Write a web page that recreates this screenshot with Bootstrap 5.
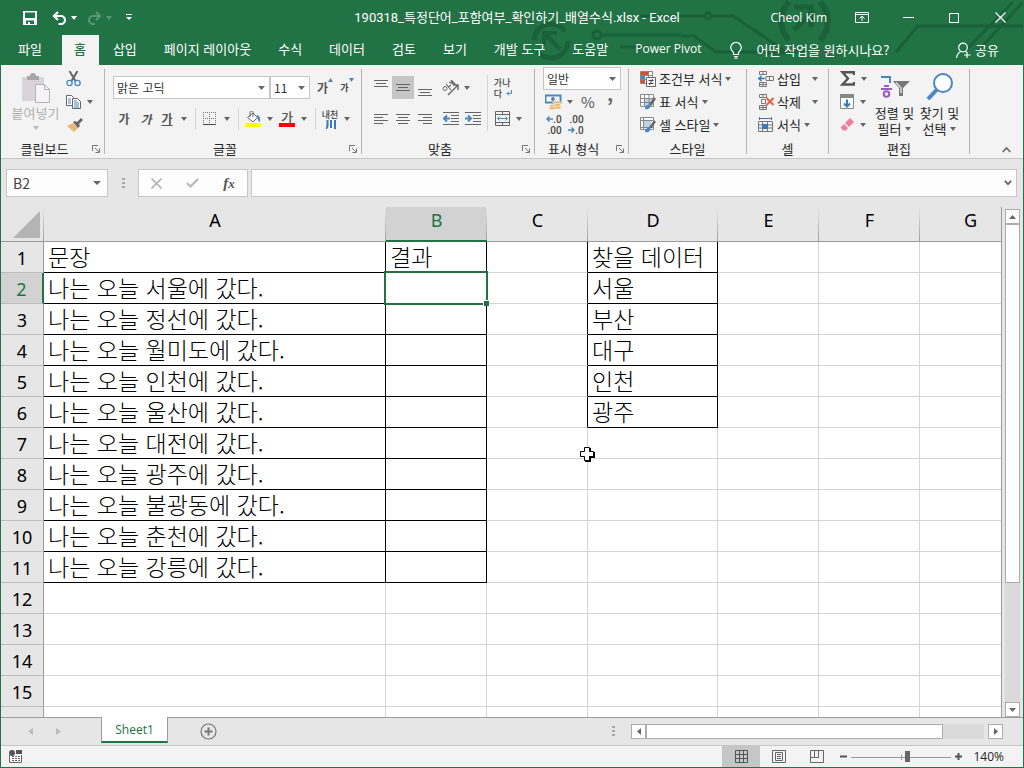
<!DOCTYPE html>
<html lang="ko">
<head>
<meta charset="utf-8">
<meta name="viewport" content="width=device-width, initial-scale=1">
<title>190318_특정단어_포함여부_확인하기_배열수식.xlsx - Excel</title>
<link href="https://cdn.jsdelivr.net/npm/bootstrap@5.3.0/dist/css/bootstrap.min.css" rel="stylesheet">
<style>
:root{--xl:#217346;--line:#d4d4d4;--edge:#9b9b9b;--ink:#262626}
body{font-family:"Noto Sans CJK KR","Noto Sans",sans-serif;font-size:13px;line-height:16px;color:var(--ink);background:#e6e6e6;border:solid var(--xl);border-width:0 1px 1px}
button,.flat{border:0;background:none;padding:0;color:inherit;border-radius:0}
svg{display:block;flex:none}
.top-area{background:var(--xl);color:#fff}
.top-art{right:0;top:0;z-index:0}
.title-row{height:35px}
.side{flex:1 0 0}
.doc-title{font-family:Roboto,"Noto Sans CJK KR",sans-serif}
.latin{font-family:"Open Sans","Noto Sans",sans-serif;font-size:12px}
.quick{padding-left:22px}
.q-undo{margin-left:15px}.q-redo{margin-left:10px}.q-more{margin-left:14px}
.win{gap:24px;padding-right:12px}
.tab-row{height:30px}
.tab-row .nav-link{color:#fff;padding:0 13px 0 14px;height:30px;line-height:28px;border-radius:0}
.tab-row .nav-link.active{background:#f3f3f3;color:var(--xl);padding:0 13px 0 12px;font-weight:500}
.tab-row .file-tab{padding:0 20px 0 17px}
.tab-row .tell{gap:14px;padding-left:16px}
.caret{width:0;height:0;border:3px solid transparent;border-top:4px solid #666;border-bottom:0;flex:none}
.ribbon{background:#f3f3f3;border-bottom:1px solid #c6c6c6;height:94px}
.grp{position:relative;display:flex;flex-direction:column;border-right:1px solid transparent;flex:none}
.grp::after{content:"";position:absolute;right:-1px;top:4px;bottom:4px;width:1px;background:#b5b5b5}
.grp-body{height:74px;display:flex}
.grp-label{height:19px;display:flex;align-items:center}
.grp-label span{flex:1;text-align:center}
.launch{width:16px;height:16px}
.g-clip{width:104px}.g-font{width:257px}.g-align{width:173px}.g-num{width:94px}.g-style{width:118px}.g-cell{width:82px}.g-edit{width:141px}
.two{display:flex;flex-direction:column;gap:8px;padding-top:11px}
.three{display:flex;flex-direction:column;padding-top:2px}
.three>*{height:23px}
.r{display:flex;align-items:center;height:23px}
.tb{width:22px;height:23px;display:flex;align-items:center;justify-content:center}
.tb.on{background:#c6c6c6}
.split{width:34px;height:23px;display:grid;grid-template-columns:20px 14px;place-items:center}
.vsep{width:1px;height:22px;background:#d5d5d5;margin:0 4px}
.box-select{appearance:none;border:1px solid #c6c6c6;border-radius:0;height:23px;padding:0 0 0 3px;font-size:12px;color:#333;background:#fff url("data:image/svg+xml,%3Csvg xmlns='http://www.w3.org/2000/svg' width='7' height='4'%3E%3Cpath d='M0 0h7L3.500 4z' fill='%23666'/%3E%3C/svg%3E") no-repeat right 4px center}
.cmd{display:flex;align-items:center;gap:3px;white-space:nowrap}
.big{width:45px;display:flex;flex-direction:column;align-items:center}
.paste{margin-left:12px;color:#b0b0b0}
.ga{font-size:12px;font-weight:700;color:#555;line-height:16px}
.tiny{font-size:9px;line-height:11px;color:#444;font-weight:500;display:flex;flex-direction:column}
.tiny>span{display:flex;align-items:center;height:11px}
.num{font-family:Roboto,sans-serif;font-size:10px;align-items:flex-end}
.fbar{height:48px;padding:10px 6px 10px 5px;gap:3px}
.fbox{background:#fdfdfd;border:1px solid #c6c6c6;height:28px;border-radius:0}
.name-box{width:102px;padding-right:6px}
.name-box input{width:70px;font-size:14px;color:#444;padding:0 0 0 6px}
.fx-box{width:110px}
.grip{width:3px;height:11px;background:repeating-linear-gradient(#a6a6a6 0 2px,transparent 2px 4px)}
.fbar .grip{margin:0 10px 0 11px}
.sheet-wrap{min-height:0}
.sheet{border-right:1px solid var(--edge);min-width:0;background:#fff}
.cells{table-layout:fixed;border-collapse:separate;border-spacing:0;width:1020px}
.cells td{height:31px;padding:0 0 2px 4px;border:solid var(--line);border-width:0 1px 1px 0;font-size:23px;line-height:28px;font-weight:300;color:#000;white-space:nowrap}
.cells thead th{height:35px;padding:0 0 8px;border-bottom:1px solid var(--edge);background:linear-gradient(to bottom,#e6e6e6,#9f9f9f) right/1px 100% no-repeat #e6e6e6}
.cells th{font:400 18px/26px "Noto Sans","Noto Sans CJK KR",sans-serif;color:#000;text-align:center;background:#e6e6e6}
.cells thead th.corner{padding:4px 4px 3px 0}
.cells tbody th{height:31px;padding:2px 0 0;border:solid #bdbdbd;border-width:0 1px 1px 0;border-right-color:var(--edge)}
.cells thead th.sel{background-color:#d2d2d2;color:var(--xl);border-bottom:2px solid var(--xl);padding-bottom:7px}
.cells tbody th.sel{background:#d2d2d2;color:var(--xl);border-right:2px solid var(--xl)}
.cells td.bk{border-color:#000}
.cells td.br{border-right-color:#000}
.cells td.cur{position:relative}
.pick{position:absolute;inset:-2px;border:2px solid var(--xl)}
.pick::after{content:"";position:absolute;right:-3px;bottom:-3px;width:6px;height:6px;background:var(--xl);border:solid #fff;border-width:1px 0 0 1px}
.pointer{left:578px;top:239px}
.vbar{width:21px;padding:2px 3px 0}
.sbtn{width:15px;height:15px;background:#fff;border:1px solid #ababab;display:flex;align-items:center;justify-content:center;flex:none}
.vtrack,.htrack{background:#dadada;flex:1}
.vthumb{height:75%;background:#fff;border:1px solid #ababab}
.hthumb{width:88%;height:15px;background:#fff;border:1px solid #ababab}
.tabs-row{height:28px;border-top:1px solid var(--edge)}
.sheet-nav{width:100px;padding-left:27px;gap:23px}
.sheet-tab{width:67px;height:26px;margin-top:-1px;background:#fff;color:var(--xl);border:solid var(--edge);border-width:0 1px;border-bottom:2px solid var(--xl);font:400 12px/26px "Open Sans","Noto Sans",sans-serif;text-align:center;text-decoration:none}
.hbar{width:376px}
.status{height:22px;background:#f3f3f3;border-top:1px solid #c6c6c6}
.view{width:38px;height:21px;display:flex;align-items:center;justify-content:center}
.view.on{background:#c6c6c6}
.zoomer{appearance:none;width:100px;height:16px;margin:0;background:linear-gradient(#999,#999) 0 8px/100% 1px no-repeat,linear-gradient(#999,#999) 50px 6px/1px 5px no-repeat}
.zoomer::-webkit-slider-thumb{appearance:none;width:5px;height:11px;background:#666;border:0}
.zoomer::-moz-range-thumb{width:5px;height:11px;background:#666;border:0;border-radius:0}
.pct{font:400 12px/16px "Open Sans","Noto Sans",sans-serif;margin:0 19px 0 11px}
</style>
</head>
<body class="vh-100 d-flex flex-column overflow-hidden">

<header class="top-area position-relative flex-shrink-0">
  <svg class="top-art position-absolute" width="500" height="65" viewBox="523 0 500 65" fill="none" stroke="#1b6039" stroke-width="3" aria-hidden="true">
    <circle cx="551" cy="41" r="17" stroke-width="5" stroke-dasharray="42 12"/><path d="M560 49L545 34M544 46V33h13" stroke-width="4"/>
    <path d="M640 16h65M711 16h22l30 20 24 17h-20M600 35h82M620 47h30M682 36h12l22 16h90"/><circle cx="708" cy="16" r="3"/><circle cx="597" cy="35" r="4"/>
    <path d="M789 2a27 27 0 0 0 0 38M820 2a27 27 0 0 1 0 38" stroke-width="6"/><path d="M794 30l20-20M794 7h17v20" stroke-width="5"/>
    <path d="M896 52l22-26h105M964 52l49-50M977 52l46-50"/>
  </svg>
  <div class="title-row d-flex align-items-center position-relative">
    <div class="side quick d-flex align-items-center">
      <button aria-label="저장"><svg width="14" height="14" viewBox="0 0 14 14"><path d="M0 0h14v14H0z" fill="#fff"/><path d="M2 1.500h10V7H2zM3 9.500h8V13H7v-2H5v2H3z" fill="#217346"/></svg></button>
      <button class="q-undo d-flex align-items-center gap-1" aria-label="실행 취소"><svg width="15" height="14" viewBox="0 0 15 14" fill="none" stroke="#fff" stroke-width="2.200"><path d="M6 1L2 5l4 4M2 5h7a4 4 0 0 1 0 8H6.500"/></svg><i class="caret" style="border-top-color:#fff"></i></button>
      <button class="q-redo d-flex align-items-center gap-1 opacity-25" aria-label="다시 실행"><svg width="15" height="14" viewBox="0 0 15 14" fill="none" stroke="#fff" stroke-width="2.200"><path d="M9 1l4 4-4 4M13 5H6a4 4 0 0 0 0 8h2"/></svg><i class="caret" style="border-top-color:#fff"></i></button>
      <button class="q-more" aria-label="빠른 실행 도구 모음 사용자 지정"><svg width="6" height="7"><path d="M0 0h6v1H0zM0 3h6L3 6z" fill="#fff"/></svg></button>
    </div>
    <div class="doc-title text-nowrap">190318_특정단어_포함여부_확인하기_배열수식.xlsx - Excel</div>
    <div class="side win d-flex align-items-center justify-content-end">
      <span class="latin text-nowrap">Cheol Kim</span>
      <button class="tb" aria-label="리본 메뉴 표시 옵션"><svg width="14" height="11" fill="none" stroke="#fff"><path d="M.5.5h13v10H.5zM.5 2.500h13M7 9V4M4.500 6.500L7 4l2.500 2.500"/></svg></button>
      <button class="tb" aria-label="최소화"><svg width="11" height="2"><path d="M0 .5h11" stroke="#fff"/></svg></button>
      <button class="tb" aria-label="최대화"><svg width="10" height="10" fill="none" stroke="#fff"><path d="M.5.5h9v9h-9z"/></svg></button>
      <button class="tb" aria-label="닫기"><svg width="11" height="11" stroke="#fff" stroke-width="1.200"><path d="M.5.5l10 10M10.500.5l-10 10"/></svg></button>
    </div>
  </div>
  <nav class="tab-row d-flex position-relative text-nowrap">
    <a class="nav-link file-tab" href="#">파일</a><a class="nav-link active" href="#">홈</a><a class="nav-link" href="#">삽입</a><a class="nav-link" href="#">페이지 레이아웃</a><a class="nav-link" href="#">수식</a><a class="nav-link" href="#">데이터</a><a class="nav-link" href="#">검토</a><a class="nav-link" href="#">보기</a><a class="nav-link" href="#">개발 도구</a><a class="nav-link" href="#">도움말</a><a class="nav-link latin" href="#">Power Pivot</a>
    <a class="nav-link tell d-flex align-items-center" href="#"><svg width="12" height="17" viewBox="0 0 12 17" fill="none" stroke="#fff" stroke-width="1.200"><path d="M3.500 12.500v-2C2 9 .7 7.700.7 5.700a5.300 5.300 0 0 1 10.600 0c0 2-1.300 3.300-2.800 4.800v2zM4 14.500h4M4.500 16.200h3"/></svg>어떤 작업을 원하시나요?</a>
    <a class="nav-link ms-auto me-2 pe-3 d-flex align-items-center gap-1" href="#"><svg width="15" height="17" viewBox="0 0 15 17" fill="none" stroke="#fff" stroke-width="1.200"><circle cx="7" cy="5.500" r="4.300"/><path d="M.6 16c0-3 1.800-5 4-6.500M9.500 9.500l1.500 1M11 10v6M8 13h6.500"/></svg>공유</a>
  </nav>
</header>

<section class="ribbon d-flex flex-shrink-0">
  <div class="grp g-clip">
    <div class="grp-body">
      <button class="big paste pt-1 mt-1 text-nowrap"><svg width="30" height="31" viewBox="0 0 30 31"><path d="M1 4h22v24H1z" fill="#d8d4d8"/><path d="M6 7V3h3a3 3 0 0 1 6 0h3v4z" fill="#a9a5a9"/><path d="M14.500 11.500h9l5 5v13h-14z" fill="#f6f4f8" stroke="#b4b0b6"/><path d="M23.500 11.500v5h5" fill="none" stroke="#b4b0b6"/></svg><span style="line-height:18px">붙여넣기</span><i class="caret mt-1" style="border-top-color:#bbb"></i></button>
      <div class="three ps-2">
        <button class="tb" style="width:14px" aria-label="잘라내기"><svg width="15" height="16" viewBox="0 0 15 16" fill="none"><path d="M3.500 0l6 10M11.500 0l-6 10" stroke="#666" stroke-width="2"/><circle cx="3.500" cy="12" r="2.600" stroke="#4a86c0" stroke-width="1.300"/><circle cx="11.500" cy="12" r="2.600" stroke="#4a86c0" stroke-width="1.300"/></svg></button>
        <button class="cmd" style="gap:6px" aria-label="복사"><svg width="15" height="14" viewBox="0 0 15 14"><g fill="#fff" stroke="#666"><path d="M.5.5h5l2 2v8h-7z"/><path d="M6.500 3.500h5l3 3v7h-8z"/></g><path d="M2 4h3M2 6h3M2 8h3M8 8h5M8 10h5M8 6h3M8 12h5" stroke="#4a86c0"/></svg><i class="caret"></i></button>
        <button class="tb" style="width:18px" aria-label="서식 복사"><svg width="16" height="14" viewBox="0 0 16 14"><path d="M0 8l6-3 5 5-4 4z" fill="#e9b872"/><path d="M6 4l2-1 2 1 4-4 2 2-4 4 1 2-2 2z" fill="#666"/></svg></button>
      </div>
    </div>
    <div class="grp-label"><span>클립보드</span><button class="launch" aria-label="클립보드 옵션"><svg width="8" height="8" class="m-1" fill="none" stroke="#777"><path d="M.5 6V.5H6M3 3l4 4M7.500 3.500v4h-4"/></svg></button></div>
  </div>

  <div class="grp g-font">
    <div class="grp-body ps-2"><div class="two">
      <div class="r"><select class="box-select" style="width:157px" aria-label="글꼴"><option>맑은 고딕</option></select><select class="box-select" style="width:40px" aria-label="글꼴 크기"><option>11</option></select>
        <button class="tb ms-1" aria-label="글꼴 크기 크게"><span class="ga fw-semibold">가</span><svg width="5" height="4" class="mb-3"><path d="M0 4h5L2.500 0z" fill="#4a86c0"/></svg></button>
        <button class="tb" aria-label="글꼴 크기 작게"><span class="ga tiny fw-semibold">가</span><svg width="5" height="4" class="mb-3"><path d="M0 0h5L2.500 4z" fill="#4a86c0"/></svg></button></div>
      <div class="r">
        <button class="tb ga">가</button><button class="tb ga fst-italic">가</button><button class="split"><span class="ga text-decoration-underline">가</span><i class="caret"></i></button><i class="vsep"></i>
        <button class="split" aria-label="테두리"><svg width="14" height="14" fill="none" stroke="#777"><path d="M.5 0v13M6.500 0v13M12.500 0v13M0 .5h13M0 6.500h13" stroke-dasharray="1 1"/><path d="M0 12.500h13" stroke="#444"/></svg><i class="caret"></i></button><i class="vsep"></i>
        <button class="split" aria-label="채우기 색"><svg width="16" height="16" viewBox="0 0 16 16"><path d="M2.500 6.500L8 2l4.500 4.500L8 11z" fill="#fff" stroke="#666"/><path d="M5 6V1.500a1.500 1.500 0 0 1 3 0V6" fill="none" stroke="#666"/><path d="M12 4c3 1 4 4 2.500 7-1 0-1.500-4-3-5z" fill="#4a86c0"/><path d="M0 12h16v4H0z" fill="#ff0"/></svg><i class="caret"></i></button>
        <button class="split" aria-label="글꼴 색"><span class="ga" style="border-bottom:4px solid red;font-size:13px;line-height:13px;font-weight:500;padding:0 2px">가</span><i class="caret"></i></button><i class="vsep"></i>
        <button class="split" aria-label="윗주 필드"><span class="tiny text-nowrap">내천<svg width="10" height="9" class="ms-1" fill="none" stroke="#3a78b8" stroke-width="2"><path d="M1.500 0v6L0 9M5 0v8M9 0v9"/></svg></span><i class="caret"></i></button></div>
    </div></div>
    <div class="grp-label"><span>글꼴</span><button class="launch" aria-label="글꼴 옵션"><svg width="8" height="8" class="m-1" fill="none" stroke="#777"><path d="M.5 6V.5H6M3 3l4 4M7.500 3.500v4h-4"/></svg></button></div>
  </div>

  <div class="grp g-align">
    <div class="grp-body ps-2">
      <div class="two" style="width:117px">
        <div class="r"><button class="tb" aria-label="위쪽 맞춤"><svg width="14" height="16" stroke="#666"><path d="M0 .5h14M2 3.500h10M0 6.500h14"/></svg></button><button class="tb on" aria-label="가운데 맞춤"><svg width="14" height="16" stroke="#666"><path d="M0 4.500h14M2 7.500h10M0 10.500h14"/></svg></button><button class="tb" aria-label="아래쪽 맞춤"><svg width="14" height="16" stroke="#666"><path d="M0 9.500h14M2 12.500h10M0 15.500h14"/></svg></button>
          <button class="split ms-1" aria-label="방향"><svg width="17" height="16" viewBox="0 0 17 16" fill="none" stroke="#666"><path d="M6 15L15.500 5.500M11 5h5v5" stroke-width="1.400"/><circle cx="3" cy="8.500" r="2"/><path d="M4 4l5 6M6.500 7L9 5M7 2l4 2-2-4M9.500.5l4 4" stroke-width="1.100"/></svg><i class="caret"></i></button></div>
        <div class="r"><button class="tb" aria-label="왼쪽 맞춤"><svg width="14" height="12" stroke="#666"><path d="M0 1.500h14M0 4.500h9M0 7.500h14M0 10.500h9"/></svg></button><button class="tb" aria-label="가운데"><svg width="14" height="12" stroke="#666"><path d="M0 1.500h14M2 4.500h10M0 7.500h14M2 10.500h10"/></svg></button><button class="tb" aria-label="오른쪽 맞춤"><svg width="14" height="12" stroke="#666"><path d="M0 1.500h14M5 4.500h9M0 7.500h14M5 10.500h9"/></svg></button>
          <button class="tb ms-1" aria-label="내어쓰기"><svg width="16" height="13" fill="none" stroke="#666"><path d="M0 .5h16M8 3.500h8M8 6.500h8M8 9.500h8M0 12.500h16"/><path d="M7 6.500H1M4 3.500l-3 3 3 3" stroke="#4a86c0" stroke-width="2"/></svg></button><button class="tb" aria-label="들여쓰기"><svg width="16" height="13" fill="none" stroke="#666"><path d="M0 .5h16M8 3.500h8M8 6.500h8M8 9.500h8M0 12.500h16"/><path d="M0 6.500h6M3 3.500l3 3-3 3" stroke="#4a86c0" stroke-width="2"/></svg></button></div>
      </div>
      <i class="vsep mx-0" style="height:56px;margin-top:10px"></i>
      <div class="two ps-1">
        <button class="tb" aria-label="텍스트 줄 바꿈"><span class="tiny text-nowrap"><span>가나</span><span>다<svg class="ms-1" width="6" height="6" fill="none" stroke="#4a86c0"><path d="M5.500 0v3.500H1M3 1.500l-2 2 2 2"/></svg></span></span></button>
        <button class="split" aria-label="병합하고 가운데 맞춤"><svg width="15" height="15" fill="none" stroke="#666"><path d="M.5.5h14v14H.5zM.5 3.500h14M.5 11.500h14M7.500.5v3M7.500 11.500v3"/><path d="M2.500 7.500h10M4.500 5.500l-2 2 2 2M10.500 5.500l2 2-2 2" stroke="#4a86c0"/></svg><i class="caret"></i></button>
      </div>
    </div>
    <div class="grp-label"><span>맞춤</span><button class="launch" aria-label="맞춤 옵션"><svg width="8" height="8" class="m-1" fill="none" stroke="#777"><path d="M.5 6V.5H6M3 3l4 4M7.500 3.500v4h-4"/></svg></button></div>
  </div>

  <div class="grp g-num">
    <div class="grp-body ps-2"><div class="three">
      <select class="box-select" style="width:78px" aria-label="표시 형식"><option>일반</option></select>
      <div class="r"><button class="split" aria-label="회계 표시 형식"><svg width="17" height="16" viewBox="0 0 17 16"><path d="M.5 1.500h15v7H.5z" fill="#fff" stroke="#4a86c0" stroke-width="2"/><circle cx="8" cy="5" r="2" fill="#4a86c0"/><g fill="#e9b872" stroke="#f3f3f3" stroke-width=".6"><ellipse cx="12" cy="8.500" rx="4" ry="1.700"/><ellipse cx="12" cy="11" rx="4" ry="1.700"/><ellipse cx="12" cy="13.500" rx="4" ry="1.700"/><ellipse cx="7.500" cy="12" rx="3.500" ry="1.600"/><ellipse cx="7.500" cy="14" rx="3.500" ry="1.600"/></g></svg><i class="caret"></i></button><button class="tb" style="font-size:15px;color:#555">%</button><button class="tb fw-bold pt-2" style="font-size:20px;color:#666;line-height:16px">’</button></div>
      <div class="r"><button class="tb" aria-label="자릿수 늘림"><span class="tiny num"><span><svg width="7" height="6" fill="none" stroke="#4a86c0" stroke-width="1.500"><path d="M7 3H1M3.500.5L1 3l2.500 2.500"/></svg>.0</span><span>.00</span></span></button><button class="tb" aria-label="자릿수 줄임"><span class="tiny num"><span>.00</span><span><svg width="7" height="6" fill="none" stroke="#4a86c0" stroke-width="1.500"><path d="M0 3h6M3.500.5L6 3 3.500 5.500"/></svg>.0</span></span></button></div>
    </div></div>
    <div class="grp-label"><span>표시 형식</span><button class="launch" aria-label="표시 형식 옵션"><svg width="8" height="8" class="m-1" fill="none" stroke="#777"><path d="M.5 6V.5H6M3 3l4 4M7.500 3.500v4h-4"/></svg></button></div>
  </div>

  <div class="grp g-style">
    <div class="grp-body" style="padding-left:11px"><div class="three">
      <button class="cmd"><svg width="16" height="16" viewBox="0 0 16 16"><path d="M.5.5h12v12H.5z" fill="#fff" stroke="#888"/><path d="M1 1h7v3H1zM1 9h4v3H1z" fill="#d35230"/><path d="M1 5h4v3H1z" fill="#4a86c0"/><path d="M0 4.500h13M0 8.500h13M8.500 0v6" stroke="#888"/><path d="M6.500 6.500h9v9h-9z" fill="#fff" stroke="#666"/><path d="M8.500 9.500h5M8.500 12.500h5M12.500 8l-3 6" stroke="#444"/></svg>조건부 서식<i class="caret"></i></button>
      <button class="cmd"><svg width="16" height="16" viewBox="0 0 16 16"><path d="M.5.5h13v12H.5z" fill="#fff" stroke="#888"/><path d="M4 4h9v8H4z" fill="#b9d3ea"/><path d="M.5 4.500h13M.5 8.500h13M4.500.5v12M9 .5v12" stroke="#888"/><path d="M15 4l-5 7" stroke="#666" stroke-width="2.500"/><path d="M5 15c0-3 2-5 5-4 1 3-2 5-5 4z" fill="#4a86c0"/></svg>표 서식<i class="caret"></i></button>
      <button class="cmd"><svg width="16" height="16" viewBox="0 0 16 16"><path d="M.5.5h13v12H.5z" fill="#fff" stroke="#888"/><path d="M4 4h7v6H4z" fill="#b9d3ea"/><path d="M.5 3.500h13M.5 10.500h13M3.500.5v12" stroke="#888"/><path d="M15 4l-5 7" stroke="#666" stroke-width="2.500"/><path d="M5 15c0-3 2-5 5-4 1 3-2 5-5 4z" fill="#4a86c0"/></svg>셀 스타일<i class="caret"></i></button>
    </div></div>
    <div class="grp-label"><span>스타일</span></div>
  </div>

  <div class="grp g-cell">
    <div class="grp-body" style="padding-left:11px"><div class="three">
      <button class="cmd"><svg width="16" height="16" viewBox="0 0 16 16" fill="none" stroke="#777"><path d="M1.500.5h7v3h-7zM5 .5v3M1.500 11.500h7v4h-7zM1.500 13.500h7M5 11.500v4M8 5.500h7.500v4H8zM11.500 5.500v4"/><path d="M7 7.500H1M3.500 5L1 7.500 3.500 10" stroke="#3a78b8" stroke-width="1.600"/></svg>삽입<i class="caret ms-2"></i></button>
      <button class="cmd"><svg width="16" height="16" viewBox="0 0 16 16" fill="none" stroke="#777"><path d="M1.500.5h7v3h-7zM5 .5v3M1.500 11.500h7v4h-7zM1.500 13.500h7M5 11.500v4M3.500 5.500h4v4h-4z"/><path d="M8.500 4l7 7M15.500 4l-7 7" stroke="#e0613a" stroke-width="2"/></svg>삭제<i class="caret ms-2"></i></button>
      <button class="cmd"><svg width="16" height="16" viewBox="0 0 16 16" fill="none" stroke="#777"><path d="M1.500 1.500h12M1.500 0v3M13.500 0v3" stroke="#3a78b8"/><path d="M.5 4.500h14v10H.5zM.5 8h14M.5 11h14M4.500 4.500v10M9.500 4.500v10"/><path d="M4 7h6v5H4z" fill="#3a78b8" stroke="none"/></svg>서식<i class="caret"></i></button>
    </div></div>
    <div class="grp-label"><span>셀</span></div>
  </div>

  <div class="grp g-edit">
    <div class="grp-body" style="padding-left:11px"><div class="three" style="width:32px">
      <button class="cmd" style="gap:6px" aria-label="자동 합계"><svg width="15" height="15" viewBox="0 0 15 15" fill="none" stroke="#555" stroke-width="2.400"><path d="M14 4V1.300H2.500L8 7.500l-5.500 6H14V11"/></svg><i class="caret"></i></button>
      <button class="cmd" style="gap:6px" aria-label="채우기"><svg width="14" height="15" viewBox="0 0 14 15"><path d="M.5.5h13v14H.5z" fill="#fff" stroke="#888"/><path d="M0 0h14v4H0z" fill="#888"/><path d="M7 5.500v7M4 9.500l3 3 3-3" fill="none" stroke="#3a78b8" stroke-width="2"/></svg><i class="caret"></i></button>
      <button class="cmd" style="gap:6px" aria-label="지우기"><svg width="14" height="13" viewBox="0 0 14 13"><path d="M5 5l5-5 4 4-5 5z" fill="#ee7f9c"/><path d="M4 6l4 4-2 2.500H3L.5 9.500z" fill="#ee7f9c"/></svg><i class="caret"></i></button>
    </div>
      <button class="big text-nowrap"><svg width="30" height="32" viewBox="0 0 30 32" style="margin:5px 0 3px"><g fill="none" stroke="#4a86c0" stroke-width="2"><path d="M1 7h9v6"/></g><g fill="none" stroke="#9b59c4" stroke-width="2"><path d="M4 16h5M1 19h11"/><circle cx="6.500" cy="24" r="2.800"/></g><path d="M13 11h17l-7 7v8h-4v-8z" fill="#777"/><path d="M16 12.500l5 5.500v5" stroke="#ddd" stroke-width="1.500" fill="none"/></svg><span>정렬 및</span><span class="d-flex align-items-center gap-1">필터<i class="caret"></i></span></button>
      <button class="big text-nowrap"><svg width="28" height="28" viewBox="0 0 28 28" style="margin:7px 0 5px"><circle cx="17" cy="11" r="9" fill="#fbfdff" stroke="#4a86c0" stroke-width="2"/><path d="M10.500 18L2 27" stroke="#4a86c0" stroke-width="4"/></svg><span>찾기 및</span><span class="d-flex align-items-center gap-1">선택<i class="caret"></i></span></button>
    </div>
    <div class="grp-label"><span>편집</span></div>
  </div>
  <button class="ms-auto mt-auto px-2 me-1 mb-0" aria-label="리본 메뉴 축소"><svg width="9" height="12" fill="none" stroke="#666" stroke-width="1.600"><path d="M.7 6l3.800-4 3.800 4"/></svg></button>
</section>

<section class="fbar d-flex align-items-center flex-shrink-0">
  <div class="fbox name-box d-flex align-items-center justify-content-between"><input class="flat" value="B2" aria-label="이름 상자"><i class="caret" style="border-width:4px 4px 0"></i></div>
  <i class="grip"></i>
  <div class="fbox fx-box d-flex align-items-center justify-content-around">
    <button aria-label="취소"><svg width="11" height="11" stroke="#b5b5b5" stroke-width="1.600"><path d="M.5.5l10 10M10.500.5l-10 10"/></svg></button>
    <button aria-label="입력"><svg width="13" height="10" fill="none" stroke="#b9b9b9" stroke-width="2.200"><path d="M1 5l3.500 3.500L12 1"/></svg></button>
    <button style="font:italic 600 15px/18px 'Liberation Serif',serif;color:#555">f<small>x</small></button>
  </div>
  <div class="fbox flex-grow-1 d-flex align-items-center"><input class="flat flex-grow-1 px-2" aria-label="수식 입력줄"><button class="px-1" aria-label="수식 입력줄 확장"><svg width="8" height="6" fill="none" stroke="#666" stroke-width="1.800"><path d="M.8.8L4 4.200 7.200.8"/></svg></button></div>
</section>

<main class="sheet-wrap d-flex flex-grow-1">
  <div class="sheet flex-grow-1 overflow-hidden position-relative" id="sheet">
    <table class="cells">
      <colgroup><col style="width:43px"><col style="width:342px"><col style="width:101px"><col style="width:101px"><col style="width:130px"><col style="width:101px"><col style="width:101px"><col style="width:101px"></colgroup>
      <thead><tr><th class="corner"><svg class="ms-auto" width="27" height="27"><path d="M27 0v27H0z" fill="#b4b4b4"/></svg></th><th>A</th><th class="sel">B</th><th>C</th><th>D</th><th>E</th><th>F</th><th>G</th></tr></thead>
      <tbody id="rows"></tbody>
    </table>
    <svg class="pointer position-absolute" width="16" height="16" viewBox="0 0 16 16"><path d="M5.500 1.500h5v4h4v5h-4v4h-5v-4h-4v-5h4z" fill="#fff" stroke="#000"/><path d="M11 2v3.500M15 6v5h-4v4H6" fill="none" stroke="#000" stroke-width="2"/></svg>
  </div>
  <div class="vbar d-flex flex-column">
    <button class="sbtn" aria-label="위로"><svg width="7" height="4"><path d="M0 4h7L3.500 0z" fill="#666"/></svg></button>
    <div class="vtrack"><div class="vthumb"></div></div>
    <button class="sbtn" aria-label="아래로"><svg width="7" height="4"><path d="M0 0h7L3.500 4z" fill="#666"/></svg></button>
  </div>
</main>

<div class="tabs-row d-flex flex-shrink-0 align-items-start">
  <div class="sheet-nav d-flex align-items-center h-100">
    <button aria-label="이전 시트"><svg width="5" height="7"><path d="M5 0v7L0 3.500z" fill="#bbb"/></svg></button><button aria-label="다음 시트"><svg width="5" height="7"><path d="M0 0v7l5-3.500z" fill="#bbb"/></svg></button>
  </div>
  <a class="sheet-tab" href="#">Sheet1</a>
  <button class="ms-4 ps-2 align-self-center" aria-label="새 시트"><svg width="17" height="17" fill="none" stroke="#777"><circle cx="8.500" cy="8.500" r="7.500" stroke-width="1.200"/><path d="M8.500 4.500v8M4.500 8.500h8" stroke-width="2"/></svg></button>
  <i class="grip ms-auto me-3 align-self-center"></i>
  <div class="hbar d-flex align-self-center me-3 pe-1">
    <button class="sbtn" aria-label="왼쪽으로"><svg width="4" height="7"><path d="M4 0v7L0 3.500z" fill="#666"/></svg></button>
    <div class="htrack me-1"><div class="hthumb"></div></div>
    <button class="sbtn" aria-label="오른쪽으로"><svg width="4" height="7"><path d="M0 0v7l4-3.500z" fill="#666"/></svg></button>
  </div>
</div>

<footer class="status d-flex align-items-center flex-shrink-0">
  <button class="ms-2" aria-label="매크로 기록"><svg width="13" height="13"><path d="M.5 5v7.500h12V5" fill="#fff" stroke="#666"/><path d="M7 0h6v4H7z" fill="#555"/><circle cx="3" cy="3" r="3" fill="#555"/><path d="M3 6.500h9M3 8.500h9M3 10.500h9" stroke="#666" stroke-dasharray="2 1"/></svg></button>
  <div class="d-flex ms-auto">
    <button class="view on" aria-label="기본"><svg width="13" height="13" fill="none" stroke="#555"><path d="M.5.5h12v12H.5zM.5 4.500h12M.5 8.500h12M4.500.5v12M8.500.5v12"/></svg></button>
    <button class="view" aria-label="페이지 레이아웃"><svg width="14" height="13" fill="none" stroke="#666"><path d="M.5.5h13v12H.5zM3.500 2.500h7v8h-7zM5 4.500h4M5 6.500h4M5 8.500h4"/></svg></button>
    <button class="view" aria-label="페이지 나누기 미리 보기"><svg width="14" height="13" fill="none" stroke="#666"><path d="M.5.5h13v12H.5zM4.500.5v7h4v-7M.5 7.500h4M8.500 7.500V.5"/></svg></button>
  </div>
  <button class="ms-1" aria-label="축소"><svg width="7" height="11"><path d="M0 5.500h7" stroke="#555" stroke-width="2"/></svg></button>
  <input class="zoomer mx-1" type="range" min="0" max="100" value="56" aria-label="확대/축소">
  <button aria-label="확대"><svg width="7" height="11" stroke="#555" stroke-width="2"><path d="M0 5.500h7M3.500 2v7"/></svg></button>
  <span class="pct">140%</span>
</footer>

<script src="https://cdn.jsdelivr.net/npm/bootstrap@5.3.0/dist/js/bootstrap.bundle.min.js"></script>
<script>
const places = ['서울', '정선', '월미도', '인천', '울산', '대전', '광주', '불광동', '춘천', '강릉'];
const columnA = ['문장', ...places.map(p => `나는 오늘 ${p}에 갔다.`)];
const columnD = ['찾을 데이터', '서울', '부산', '대구', '인천', '광주'];
const sheet = document.getElementById('sheet');

// Draw as many rows as the window can show.
function drawRows() {
  const count = Math.max(1, Math.ceil((sheet.clientHeight - 35) / 31));
  let html = '';
  for (let r = 1; r <= count; r++) {
    const ab = r <= 11 ? 'bk' : '', d = r <= 6;
    html += `<tr><th class="${r === 2 ? 'sel' : ''}">${r}</th>
      <td class="${ab}">${columnA[r - 1] || ''}</td>
      <td class="${ab} ${r === 2 ? 'cur' : ''}">${r === 1 ? '결과' : r === 2 ? '<span class="pick"></span>' : ''}</td>
      <td class="${d ? 'br' : ''}"></td><td class="${d ? 'bk' : ''}">${columnD[r - 1] || ''}</td>
      <td></td><td></td><td></td></tr>`;
  }
  document.getElementById('rows').innerHTML = html;
}
drawRows();
addEventListener('resize', drawRows);
</script>
</body>
</html>
